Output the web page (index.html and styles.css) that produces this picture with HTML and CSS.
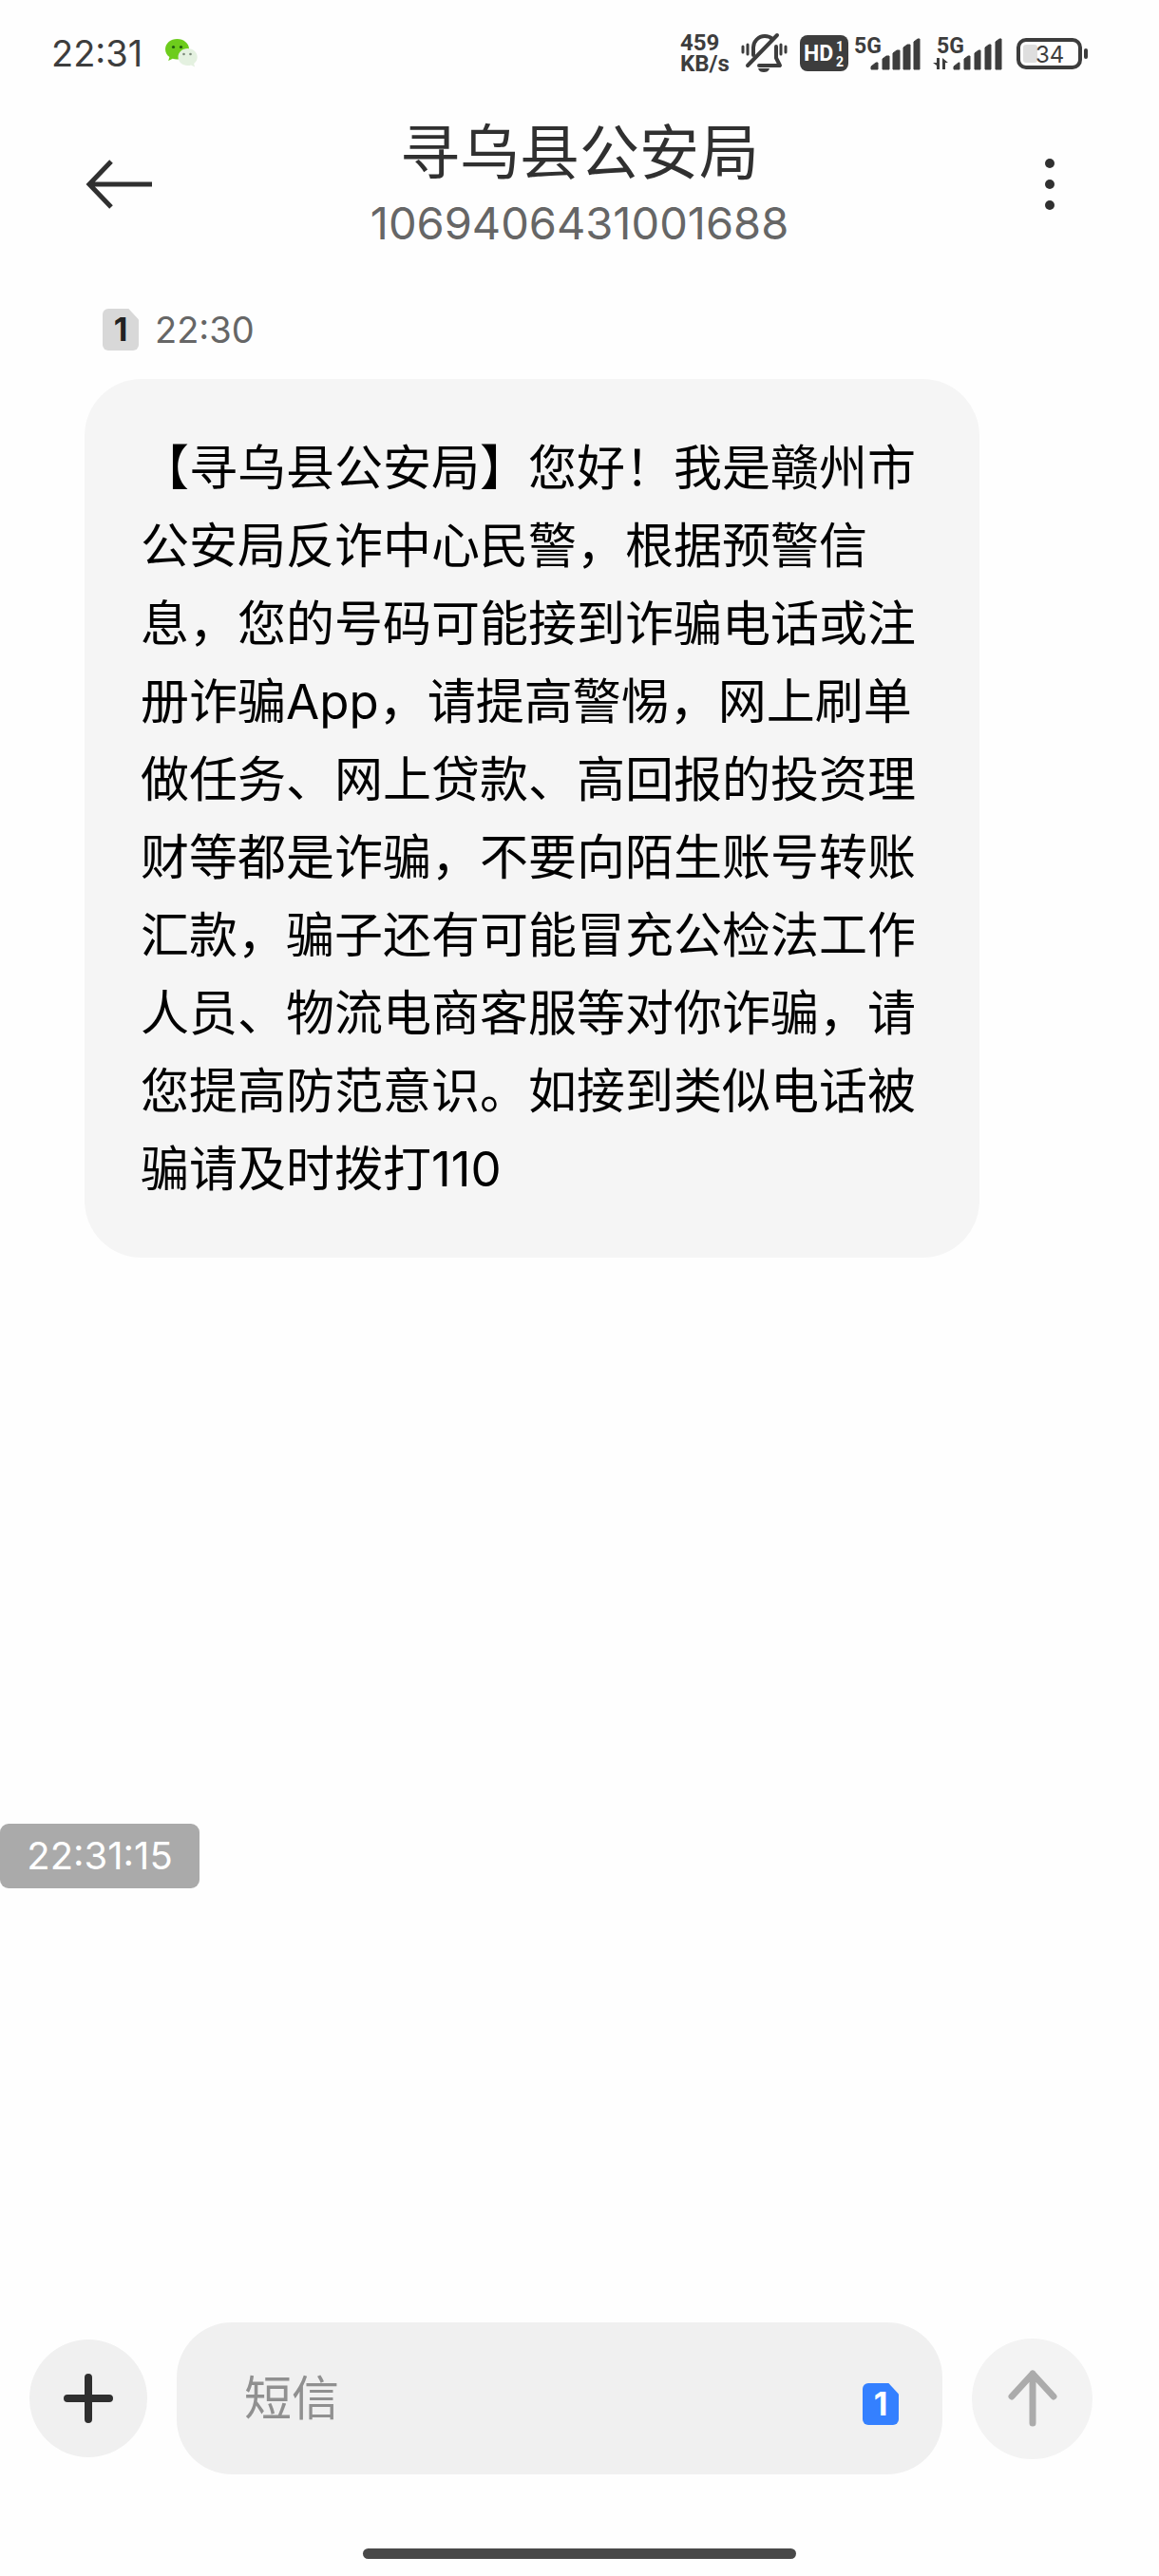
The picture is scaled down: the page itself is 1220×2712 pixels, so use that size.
FILE: index.html
```
<!DOCTYPE html>
<html lang="zh-CN">
<head>
<meta charset="utf-8">
<meta name="viewport" content="width=device-width, initial-scale=1">
<title>寻乌县公安局</title>
<link rel="stylesheet" href="styles.css">
</head>
<body>
<div class="statusbar">
  <span class="clock">22:31</span>
  <svg class="wechat" width="34" height="30" viewBox="0 0 34 30">
    <path d="M12.500 0C5.500 0 0 4.600 0 10.800c0 3.600 1.700 6.400 4.400 8.300L3.200 23l4.500-2.300c1.500.5 3 .7 4.800.7 7 0 12.500-4.600 12.500-10.600S19.500 0 12.500 0z" fill="#6dcc1c"/>
    <circle cx="8.500" cy="8.500" r="1.600" fill="#1f5c10"/>
    <circle cx="16.500" cy="8.500" r="1.600" fill="#1f5c10"/>
    <path d="M23.500 10C17.800 10 13.500 14 13.500 19s4.300 9 10 9c1.200 0 2.500-.2 3.600-.6l4 2-1-3.500c2.300-1.700 3.600-4 3.600-6.900 0-5-4.500-9-10.200-9z" fill="#e4f1e0"/>
    <circle cx="19.500" cy="16" r="1.300" fill="#7c8a7a"/>
    <circle cx="26.500" cy="16" r="1.300" fill="#7c8a7a"/>
  </svg>
  <div class="indicators">
    <span class="speed">459<br>KB/s</span>
    <svg class="bell" width="50" height="42" viewBox="0 0 50 42" fill="none" stroke="#3d3d3d" stroke-width="4" stroke-linecap="round">
      <path d="M13 23v-8c0-6 5-12 12-12 3 0 6 1 8 3M37 14v12l4 8H19" stroke-linejoin="round"/>
      <path d="M38 2L7 34"/>
      <path d="M18 37h12c-1 3-3 4-6 4s-5-1-6-4z" fill="#3d3d3d" stroke="none"/>
      <path d="M2 14v6M7 12v10M42 12v10M47 14v6" stroke-width="3"/>
    </svg>
    <svg class="hd" width="51" height="40" viewBox="0 0 51 40">
      <rect x="0" y="1" width="51" height="38" rx="8" fill="#3d3d3d"/>
      <text class="hd-text" x="4" y="28">HD</text>
      <text class="hd-num" x="38" y="18">1</text>
      <text class="hd-num" x="38" y="34">2</text>
    </svg>
    <svg class="signal" width="69" height="40" viewBox="0 0 69 40">
      <text class="net" x="0" y="20">5G</text>
      <path d="M18 37v-3l5-4h2v7zM30 37V26l4-3h3v14zM41 37V20l4-3h3v20zM52 37V14l4-3h3v26zM63 37V8l4-3h2v32z" fill="#3d3d3d" stroke="#3d3d3d" stroke-linejoin="round"/>
    </svg>
    <svg class="signal signal-two" width="73" height="40" viewBox="0 0 73 40">
      <text class="net" x="4" y="20">5G</text>
      <path d="M7 25v12H4v-4l-4-3h4v-5zM10 37V25l6 5h-3v7z" fill="#3d3d3d"/>
      <path d="M22 37v-3l5-4h1v7zM33 37V26l4-3h2v14zM44 37V20l4-3h2v20zM55 37V14l4-3h2v26zM66 37V8l4-3h2v32z" fill="#3d3d3d" stroke="#3d3d3d" stroke-linejoin="round"/>
    </svg>
    <svg class="battery" width="76" height="34" viewBox="0 0 76 34">
      <rect x="2" y="3" width="65" height="29" rx="8" fill="none" stroke="#3d3d3d" stroke-width="4"/>
      <rect x="7" y="8" width="15" height="19" rx="3" fill="#dedede"/>
      <rect x="71" y="12" width="4" height="11" rx="2" fill="#3d3d3d"/>
      <text class="level" x="20" y="27">34</text>
    </svg>
  </div>
</div>

<header class="header">
  <button class="icon-btn back" type="button" aria-label="返回">
    <svg width="72" height="52" viewBox="0 0 72 52" fill="none" stroke="#303030" stroke-width="5">
      <path d="M27 2L4 26l23 24M4 26h66"/>
    </svg>
  </button>
  <div class="contact">
    <h1 class="name">寻乌县公安局</h1>
    <div class="number">1069406431001688</div>
  </div>
  <button class="icon-btn more" type="button" aria-label="更多">
    <svg width="50" height="60" viewBox="0 0 50 60" fill="#303030">
      <circle cx="25" cy="8" r="5"/>
      <circle cx="25" cy="30" r="5"/>
      <circle cx="25" cy="52" r="5"/>
    </svg>
  </button>
</header>

<main class="thread">
  <div class="meta">
    <span class="sim">1</span>
    <time class="sent">22:30</time>
  </div>
  <p class="bubble">【寻乌县公安局】您好！我是赣州市公安局反诈中心民警，根据预警信息，您的号码可能接到诈骗电话或注册诈骗App，请提高警惕，网上刷单做任务、网上贷款、高回报的投资理财等都是诈骗，不要向陌生账号转账汇款，骗子还有可能冒充公检法工作人员、物流电商客服等对你诈骗，请您提高防范意识。如接到类似电话被骗请及时拨打110</p>
</main>

<div class="stamp">22:31:15</div>

<form class="composer">
  <button class="round" type="button" aria-label="添加">
    <svg width="52" height="60" viewBox="0 0 52 60" stroke="#2f2f2f" stroke-width="8" stroke-linecap="round">
      <path d="M26 8v44M4 30h44"/>
    </svg>
  </button>
  <div class="field">
    <input class="input" type="text" placeholder="短信" aria-label="短信">
    <button class="sim sim-active" type="button" aria-label="SIM 1">1</button>
  </div>
  <button class="round send" type="button" aria-label="发送">
    <svg width="52" height="60" viewBox="0 0 52 60" fill="none" stroke="#ababab" stroke-width="7" stroke-linecap="round" stroke-linejoin="round">
      <path d="M4 28L26 4l22 24M26 4v52"/>
    </svg>
  </button>
</form>
<div class="homebar"></div>
</body>
</html>
```

FILE: styles.css
```
* { box-sizing: border-box; }

body {
  margin: 0;
  min-height: 100vh;
  display: flex;
  flex-direction: column;
  background: #fefefe;
  color: #303030;
  font-family: Inter, "Noto Sans CJK SC", sans-serif;
}

button, input { font-family: inherit; border: 0; padding: 0; }
svg { display: block; flex: none; overflow: visible; }

/* status bar */
.statusbar {
  display: flex;
  align-items: center;
  height: 112px;
  padding: 0 74px 0 54px;
  color: #3d3d3d;
}
.clock { font-size: 38px; line-height: 48px; }
.wechat { margin-left: 24px; }
.indicators { display: flex; align-items: center; margin-left: auto; }
.speed {
  width: 62px;
  font-family: Roboto, sans-serif;
  font-size: 24px;
  line-height: 22px;
  font-weight: 700;
}
.bell { margin-left: 2px; }
.hd { margin-left: 12px; }
.signal { margin-left: 6px; }
.signal-two { margin-left: 14px; }
.battery { margin-left: 15px; }
.net, .hd-text, .hd-num { font-family: Roboto, sans-serif; font-weight: 700; }
.net { font-size: 23px; fill: #3d3d3d; }
.hd-text { font-size: 23px; fill: #fff; }
.hd-num { font-size: 14px; fill: #fff; }
.level { font-size: 24px; fill: #3d3d3d; }

/* header */
.header {
  display: grid;
  grid-template-columns: 1fr auto 1fr;
  align-items: center;
  padding: 10px 90px 0;
}
.icon-btn { background: none; }
.back { justify-self: start; }
.more { justify-self: end; }
.contact { text-align: center; }
.name { margin: 0; font-size: 63px; line-height: 76px; font-weight: 400; }
.number { margin-top: 7px; font-size: 47px; line-height: 60px; color: #666; }

/* messages */
.thread { flex: 1; padding: 60px 189px 0 89px; }
.meta {
  display: flex;
  align-items: center;
  gap: 17px;
  padding-left: 19px;
  margin-bottom: 30px;
}
.sim {
  flex: none;
  width: 38px;
  height: 44px;
  border-radius: 6px;
  clip-path: polygon(0 0, 72% 0, 100% 26%, 100% 100%, 0 100%);
  background: #d8d8d8;
  color: #222;
  font-size: 34px;
  line-height: 44px;
  font-weight: 700;
  text-align: center;
}
.sent { font-size: 38px; line-height: 44px; color: #666; }
.bubble {
  margin: 0;
  padding: 53px 59px 52px;
  border-radius: 60px;
  background: #f5f5f5;
  color: #000;
  font-size: 51px;
  line-height: 82px;
}

/* floating clock */
.stamp {
  position: fixed;
  left: 0;
  bottom: 724px;
  width: 210px;
  border-radius: 9px;
  background: #aaa;
  color: #fff;
  font-size: 40px;
  line-height: 68px;
  text-align: center;
}

/* composer */
.composer {
  display: flex;
  align-items: center;
  gap: 31px;
  padding: 0 70px 0 31px;
}
.round {
  display: flex;
  flex: none;
  align-items: center;
  justify-content: center;
  width: 124px;
  height: 124px;
  border-radius: 50%;
  background: #f0f0f0;
}
.send { width: 127px; height: 127px; background: #f3f3f3; }
.field {
  display: flex;
  flex: 1;
  align-items: center;
  min-width: 0;
  height: 160px;
  padding: 0 46px 0 71px;
  border-radius: 58px;
  background: #f0f0f0;
}
.input {
  flex: 1;
  min-width: 0;
  height: 80px;
  background: none;
  color: #000;
  font-size: 50px;
}
.input::placeholder { color: #909090; opacity: 1; }
.sim-active { margin-top: 12px; background: #3480ff; color: #fff; }

.homebar {
  width: 456px;
  height: 11px;
  margin: 78px auto 18px;
  border-radius: 6px;
  background: #484848;
}
```
